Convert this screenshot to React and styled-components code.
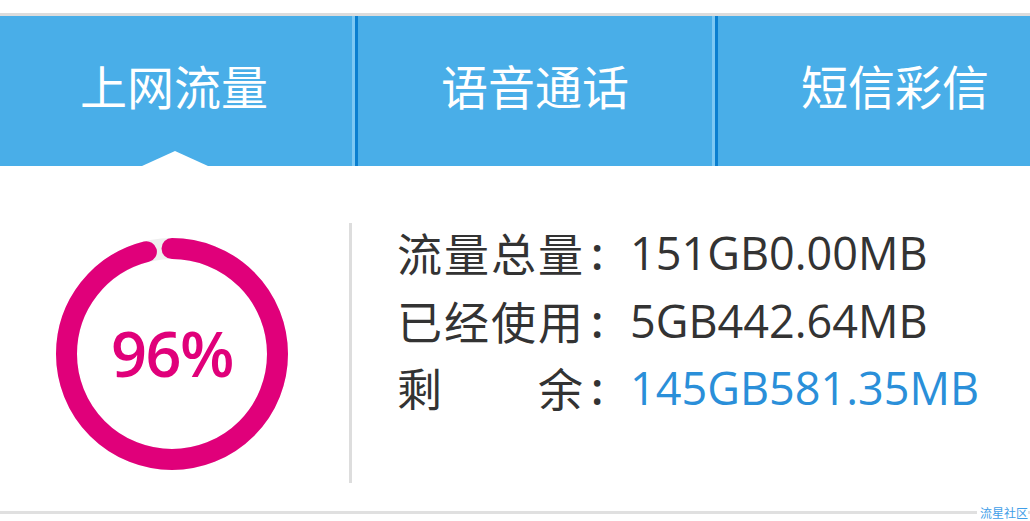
import React from 'react';
import styled, { createGlobalStyle } from 'styled-components';

const GlobalStyle = createGlobalStyle`
    html, body {
        margin: 0;
        padding: 0;
        background: #fff;
        overflow: hidden;
    }
    body {
        font-family: "Open Sans", "Noto Sans CJK SC", sans-serif;
    }
`;

const Page = styled.div`
    width: 1030px;
    height: 521px;
    padding-top: 13px;
    box-sizing: border-box;
    overflow: hidden;
    position: relative;
`;

const Rule = styled.div`
    height: 3px;
    background-color: #dcdcdc;
`;

const TabBar = styled.div`
    display: flex;
    height: 150px;
    background-color: #49aee8;
`;

const Tab = styled.div`
    flex: 0 0 auto;
    width: ${(props) => props.width}px;
    display: flex;
    align-items: center;
    justify-content: center;
    padding-bottom: 14px;
    padding-right: ${(props) => (props.first ? '4px' : '0')};
    box-sizing: border-box;
    position: relative;
    color: #fff;
    font-size: 47px;
    border-right: 3px solid #7cc8f3;
    border-left: ${(props) => (props.first ? 'none' : '3px solid #0a7fd0')};

    /* little notch pointing at the active tab */
    &::after {
        content: '';
        display: ${(props) => (props.active ? 'block' : 'none')};
        position: absolute;
        bottom: 0;
        left: 175px;
        margin-left: -33px;
        border-left: 33px solid transparent;
        border-right: 33px solid transparent;
        border-bottom: 15px solid #fff;
    }
`;

const Content = styled.div`
    display: flex;
    height: 345px;
`;

const RingCol = styled.div`
    width: 349px;
    padding: 72px 0 0 56px;
    box-sizing: border-box;
`;

const Ring = styled.div`
    display: grid;
    width: 232px;
    height: 232px;
    place-items: center;
    & > * {
        grid-area: 1 / 1;
    }
`;

const Percent = styled.span`
    font-family: "Open Sans", sans-serif;
    font-size: 63px;
    font-weight: 600;
    color: #e0007a;
    letter-spacing: -1.5px;
    margin-top: -4px;
`;

const Divider = styled.div`
    width: 3px;
    margin: 57px 0 28px;
    background-color: #dddddd;
`;

const Info = styled.div`
    padding: 53px 0 0 45px;
    display: flex;
    flex-direction: column;
`;

const Row = styled.div`
    display: flex;
    align-items: center;
    height: 67.5px;
    font-size: 45px;
    color: #333;
    white-space: nowrap;
`;

const Label = styled.span`
    display: flex;
    justify-content: space-between;
    width: 186px;
`;

const Colon = styled.span`
    width: 47px;
    padding-left: 8px;
    box-sizing: border-box;
    font-weight: 600;
`;

const Value = styled.span`
    color: ${(props) => props.color || '#333'};
`;

const BottomRule = styled.div`
    height: 3px;
    background-color: #e0e0e0;
`;

const Watermark = styled.span`
    position: absolute;
    right: 2px;
    bottom: 1px;
    padding-left: 3px;
    background: #fff;
    font-family: "Noto Sans CJK SC", sans-serif;
    font-size: 12px;
    line-height: 14px;
    color: #3f9ee8;
`;

const tabs = [
    { name: '上网流量', width: 355 },
    { name: '语音通话', width: 360 },
    { name: '短信彩信', width: 360 },
];

const rows = [
    { label: ['流', '量', '总', '量'], value: '151GB0.00MB' },
    { label: ['已', '经', '使', '用'], value: '5GB442.64MB' },
    { label: ['剩', '余'], value: '145GB581.35MB', color: '#2a8fd9' },
];

const UsageRing = ({ percent }) => {
    const r = 105.5;
    const c = 2 * Math.PI * r;
    return (
        <Ring>
            <svg width="232" height="232" viewBox="0 0 232 232">
                <circle cx="116" cy="116" r={r} fill="none" stroke="#eeeeee" strokeWidth="21" />
                <circle
                    cx="116"
                    cy="116"
                    r={r}
                    fill="none"
                    stroke="#e0007a"
                    strokeWidth="21"
                    strokeLinecap="round"
                    strokeDasharray={`${(c * percent) / 100} ${c}`}
                    transform="rotate(-90 116 116)"
                />
            </svg>
            <Percent>{percent}%</Percent>
        </Ring>
    );
};

const App = () => {
    return (
        <Page>
            <GlobalStyle />
            <Rule />
            <TabBar>
                {tabs.map((t, i) => (
                    <Tab key={t.name} width={t.width} first={i === 0} active={i === 0}>
                        {t.name}
                    </Tab>
                ))}
            </TabBar>
            <Content>
                <RingCol>
                    <UsageRing percent={96} />
                </RingCol>
                <Divider />
                <Info>
                    {rows.map((row) => (
                        <Row key={row.value}>
                            <Label>
                                {row.label.map((ch, i) => (
                                    <span key={i}>{ch}</span>
                                ))}
                            </Label>
                            <Colon>:</Colon>
                            <Value color={row.color}>{row.value}</Value>
                        </Row>
                    ))}
                </Info>
            </Content>
            <BottomRule />
            <Watermark>流星社区</Watermark>
        </Page>
    );
};

export default App;
